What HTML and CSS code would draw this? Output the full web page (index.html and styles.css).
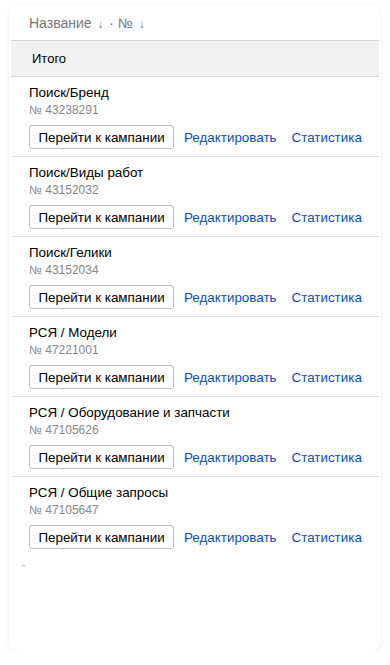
FILE: index.html
```html
<!DOCTYPE html>
<html lang="ru">
<head>
  <meta charset="UTF-8">
  <meta name="viewport" content="width=device-width, initial-scale=1">
  <title>Кампании</title>
  <link rel="stylesheet" href="styles.css">
</head>
<body>
  <div class="card">
    <div class="sort">Название <span class="arrow">↓</span> · № <span class="arrow">↓</span></div>

    <div class="total">Итого</div>

    <div class="row">
      <div class="name">Поиск/Бренд</div>
      <div class="num">№ 43238291</div>
      <div class="actions">
        <button class="btn">Перейти к кампании</button>
        <a class="link" href="#">Редактировать</a>
        <a class="link" href="#">Статистика</a>
      </div>
    </div>

    <div class="row">
      <div class="name">Поиск/Виды работ</div>
      <div class="num">№ 43152032</div>
      <div class="actions">
        <button class="btn">Перейти к кампании</button>
        <a class="link" href="#">Редактировать</a>
        <a class="link" href="#">Статистика</a>
      </div>
    </div>

    <div class="row">
      <div class="name">Поиск/Гелики</div>
      <div class="num">№ 43152034</div>
      <div class="actions">
        <button class="btn">Перейти к кампании</button>
        <a class="link" href="#">Редактировать</a>
        <a class="link" href="#">Статистика</a>
      </div>
    </div>

    <div class="row">
      <div class="name">РСЯ / Модели</div>
      <div class="num">№ 47221001</div>
      <div class="actions">
        <button class="btn">Перейти к кампании</button>
        <a class="link" href="#">Редактировать</a>
        <a class="link" href="#">Статистика</a>
      </div>
    </div>

    <div class="row">
      <div class="name">РСЯ / Оборудование и запчасти</div>
      <div class="num">№ 47105626</div>
      <div class="actions">
        <button class="btn">Перейти к кампании</button>
        <a class="link" href="#">Редактировать</a>
        <a class="link" href="#">Статистика</a>
      </div>
    </div>

    <div class="row last">
      <div class="name">РСЯ / Общие запросы</div>
      <div class="num">№ 47105647</div>
      <div class="actions">
        <button class="btn">Перейти к кампании</button>
        <a class="link" href="#">Редактировать</a>
        <a class="link" href="#">Статистика</a>
      </div>
    </div>

    <div class="tick"></div>
  </div>
</body>
</html>
```

FILE: styles.css
```css
body {
  font-family: "Liberation Sans", Arial, sans-serif;
  margin: 0;
  padding: 5px 9px 0;
  background: #fff;
  color: #000;
}
.card {
  height: 646px;
  box-sizing: border-box;
  padding: 0 2px;
  border-radius: 10px;
  background: #fff;
  box-shadow: 0 1px 4px rgba(0, 0, 0, 0.08);
}
.sort {
  height: 35px;
  line-height: 36px;
  padding-left: 18px;
  font-size: 14px;
  color: #777;
  border-bottom: 1px solid #d6d6d6;
}
.sort .arrow {
  font-size: 12px;
  margin: 0 2px;
}
.total {
  height: 35px;
  line-height: 35px;
  padding-left: 21px;
  font-size: 13px;
  background: #f2f2f2;
  border-bottom: 1px solid #d6d6d6;
}
.row {
  height: 80px;
  box-sizing: border-box;
  padding: 7px 0 0 18px;
  border-bottom: 1px solid #e2e2e2;
}
.row.last { border-bottom: none; }
.name {
  font-size: 13.4px;
  line-height: 18px;
}
.num {
  font-size: 12px;
  line-height: 16px;
  color: #888;
}
.actions {
  display: flex;
  align-items: center;
  margin-top: 7px;
}
.btn {
  height: 24px;
  width: 145px;
  padding: 0;
  font-family: inherit;
  font-size: 13.4px;
  color: #000;
  background: #fff;
  border: 1px solid #bfbfbf;
  border-radius: 3px;
}
.link {
  font-size: 13.4px;
  color: #0a4dbf;
  text-decoration: none;
  margin-left: 10px;
}
.link + .link { margin-left: 15px; }
.tick {
  width: 3px;
  height: 1px;
  margin: 8px 0 0 11px;
  background: #bbb;
}
```
